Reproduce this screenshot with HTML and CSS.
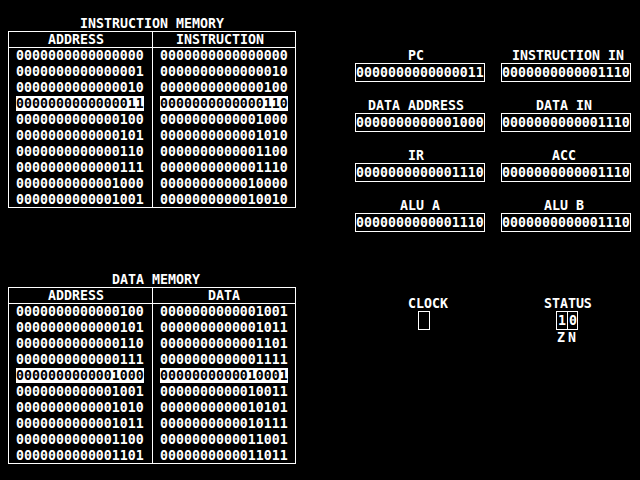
FILE: index.html
```html
<!DOCTYPE html>
<html>
<head>
<meta charset="utf-8">
<title>CPU Simulator</title>
<link rel="stylesheet" href="styles.css">
</head>
<body>
<div class="screen">
  <div class="left">
    <section class="mem">
      <div class="title">INSTRUCTION MEMORY</div>
      <div class="table">
        <div class="col col-a">
          <div class="hdr">ADDRESS</div>
          <div class="rows">
            <div class="row">0000000000000000</div>
            <div class="row">0000000000000001</div>
            <div class="row">0000000000000010</div>
            <div class="row"><span class="hl">0000000000000011</span></div>
            <div class="row">0000000000000100</div>
            <div class="row">0000000000000101</div>
            <div class="row">0000000000000110</div>
            <div class="row">0000000000000111</div>
            <div class="row">0000000000001000</div>
            <div class="row">0000000000001001</div>
          </div>
        </div>
        <div class="col col-b">
          <div class="hdr nudge">INSTRUCTION</div>
          <div class="rows">
            <div class="row">0000000000000000</div>
            <div class="row">0000000000000010</div>
            <div class="row">0000000000000100</div>
            <div class="row"><span class="hl">0000000000000110</span></div>
            <div class="row">0000000000001000</div>
            <div class="row">0000000000001010</div>
            <div class="row">0000000000001100</div>
            <div class="row">0000000000001110</div>
            <div class="row">0000000000010000</div>
            <div class="row">0000000000010010</div>
          </div>
        </div>
      </div>
    </section>
    <section class="mem">
      <div class="title shift-r">DATA MEMORY</div>
      <div class="table">
        <div class="col col-a">
          <div class="hdr">ADDRESS</div>
          <div class="rows">
            <div class="row">0000000000000100</div>
            <div class="row">0000000000000101</div>
            <div class="row">0000000000000110</div>
            <div class="row">0000000000000111</div>
            <div class="row"><span class="hl">0000000000001000</span></div>
            <div class="row">0000000000001001</div>
            <div class="row">0000000000001010</div>
            <div class="row">0000000000001011</div>
            <div class="row">0000000000001100</div>
            <div class="row">0000000000001101</div>
          </div>
        </div>
        <div class="col col-b">
          <div class="hdr">DATA</div>
          <div class="rows">
            <div class="row">0000000000001001</div>
            <div class="row">0000000000001011</div>
            <div class="row">0000000000001101</div>
            <div class="row">0000000000001111</div>
            <div class="row"><span class="hl">0000000000010001</span></div>
            <div class="row">0000000000010011</div>
            <div class="row">0000000000010101</div>
            <div class="row">0000000000010111</div>
            <div class="row">0000000000011001</div>
            <div class="row">0000000000011011</div>
          </div>
        </div>
      </div>
    </section>
  </div>

  <div class="right">
    <div class="regs">
      <div class="reg reg-l">
        <div class="reg-label">PC</div>
        <div class="box">0000000000000011</div>
      </div>
      <div class="reg reg-r">
        <div class="reg-label">INSTRUCTION IN</div>
        <div class="box">0000000000001110</div>
      </div>
      <div class="reg reg-l">
        <div class="reg-label">DATA ADDRESS</div>
        <div class="box">0000000000001000</div>
      </div>
      <div class="reg reg-r">
        <div class="reg-label odd">DATA IN</div>
        <div class="box">0000000000001110</div>
      </div>
      <div class="reg reg-l">
        <div class="reg-label">IR</div>
        <div class="box">0000000000001110</div>
      </div>
      <div class="reg reg-r">
        <div class="reg-label odd">ACC</div>
        <div class="box">0000000000001110</div>
      </div>
      <div class="reg reg-l">
        <div class="reg-label odd">ALU A</div>
        <div class="box">0000000000001110</div>
      </div>
      <div class="reg reg-r">
        <div class="reg-label odd">ALU B</div>
        <div class="box">0000000000001110</div>
      </div>
    </div>

    <div class="io">
      <div class="io-group">
        <div class="io-label">CLOCK</div>
        <div class="clock-box"></div>
      </div>
      <div class="io-group">
        <div class="io-label">STATUS</div>
        <div class="status-box">
          <span class="bit">1</span><span class="bit">0</span>
        </div>
        <div class="flags"><span>Z</span><span>N</span></div>
      </div>
    </div>
  </div>
</div>
</body>
</html>
```

FILE: styles.css
```css
* {
  box-sizing: border-box;
  margin: 0;
  padding: 0;
}

html,
body {
  background: #000;
}

body {
  width: 640px;
  height: 480px;
  overflow: hidden;
  color: #fff;
  font-family: "DejaVu Sans Mono", "Liberation Mono", monospace;
  font-weight: bold;
  font-size: 13.288px;
  line-height: 16px;
}

.screen {
  display: flex;
  align-items: flex-start;
}

/* ---------- memory tables ---------- */
.left {
  width: 296px;
  padding: 16px 0 0 8px;
}

.mem + .mem {
  margin-top: 64px;
}

.title {
  height: 16px;
  width: 288px;
  text-align: center;
  white-space: pre;
}

.title.shift-r {
  padding-left: 8px;
}

.table {
  display: flex;
  width: 288px;
  margin-top: -1px;
  border: 1px solid #fff;
}

.col-a {
  width: 144px;
  border-right: 1px solid #fff;
}

.col-b {
  width: 142px;
}

.hdr {
  height: 16px;
  border-bottom: 1px solid #fff;
  text-align: center;
  white-space: pre;
}

.col-a .hdr {
  padding-right: 9px;
}

.hdr.nudge {
  padding-right: 8px;
}

.rows {
  margin-bottom: -1px;
}

.row {
  height: 16px;
  padding-left: 7px;
  white-space: pre;
}

.hl {
  background: #fff;
  color: #000;
}

/* ---------- registers ---------- */
.right {
  margin-left: 59px;
  padding-top: 48px;
}

.regs {
  display: grid;
  grid-template-columns: 130px 130px;
  column-gap: 16px;
  row-gap: 16px;
}

.reg-label {
  height: 16px;
  text-align: center;
  white-space: pre;
}

.reg-l .reg-label {
  padding-right: 8px;
}

.reg-l .reg-label.odd {
  padding-right: 0;
}

.reg-r .reg-label {
  padding-left: 4px;
}

.reg-r .reg-label.odd {
  padding-left: 0;
  padding-right: 4px;
}

.box {
  height: 19px;
  margin-top: -1px;
  border: 1px solid #fff;
  line-height: 17px;
  white-space: pre;
}

/* ---------- clock / status ---------- */
.io {
  display: flex;
  gap: 96px;
  margin-top: 64px;
  padding-left: 53px;
}

.io-group {
  display: flex;
  flex-direction: column;
  align-items: flex-start;
}

.io-label {
  height: 16px;
  white-space: pre;
}

.clock-box {
  width: 12px;
  height: 19px;
  margin: -1px 0 0 10px;
  border: 1px solid #fff;
}

.status-box {
  display: flex;
  height: 19px;
  margin: -1px 0 0 12px;
  border: 1px solid #fff;
  line-height: 17px;
}

.bit {
  width: 10px;
  padding-left: 1px;
}

.bit + .bit {
  border-left: 1px solid #fff;
}

.flags {
  display: flex;
  gap: 3px;
  margin-left: 13px;
  height: 16px;
}
```
